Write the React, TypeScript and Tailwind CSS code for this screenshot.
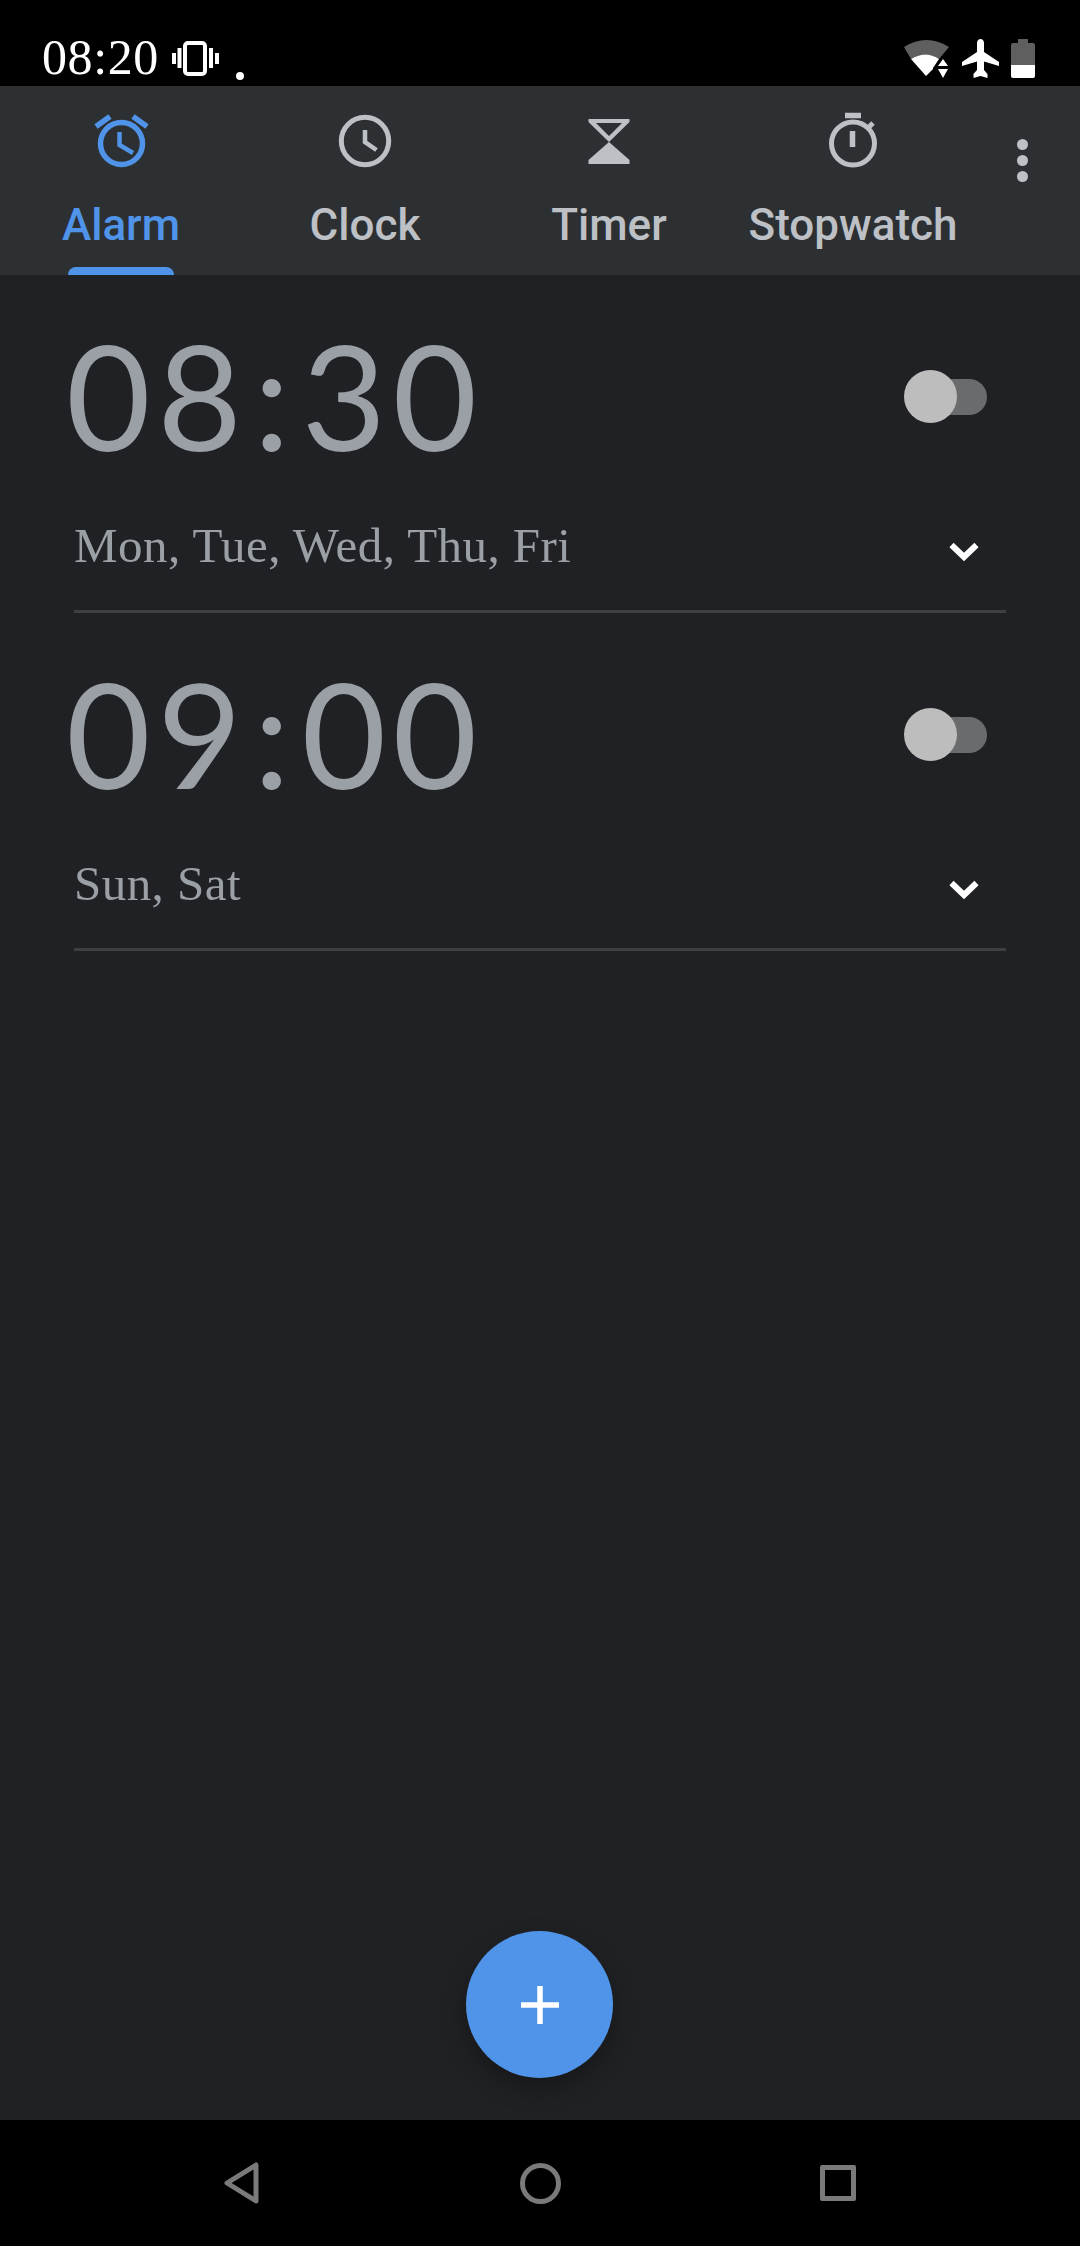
import React from 'react';

const tabs = [
  { label: 'Alarm', active: true },
  { label: 'Clock', active: false },
  { label: 'Timer', active: false },
  { label: 'Stopwatch', active: false },
];

const alarms = [
  { hours: '08', minutes: '30', days: 'Mon, Tue, Wed, Thu, Fri' },
  { hours: '09', minutes: '00', days: 'Sun, Sat' },
];

const TabIcon = ({ name }: { name: string }) => {
  if (name === 'Alarm') {
    return (
      <svg width="60" height="60" viewBox="0 0 60 60" fill="none" stroke="currentColor">
        <circle cx="30.5" cy="31.5" r="21" strokeWidth="5.5" />
        <path d="M5 14.5 L19 4.5 M42 4.5 L56 14.5" strokeWidth="5.5" />
        <path d="M28.5 20 V33 L42 41" strokeWidth="4.5" />
      </svg>
    );
  }
  if (name === 'Clock') {
    return (
      <svg width="60" height="60" viewBox="0 0 60 60" fill="none" stroke="currentColor">
        <circle cx="30" cy="29" r="23.7" strokeWidth="5" />
        <path d="M30 18 V30 L41.5 38" strokeWidth="4.5" />
      </svg>
    );
  }
  if (name === 'Timer') {
    return (
      <svg width="60" height="60" viewBox="0 0 60 60" fill="currentColor">
        <path fillRule="evenodd" d="M9.5 7 H50.5 V10 L30 30 L9.5 10 Z M17 11 H43 L30 24 Z" />
        <path d="M30 30 L50.5 48 V52 H9.5 V48 Z" />
      </svg>
    );
  }
  return (
    <svg width="60" height="60" viewBox="0 0 60 60" fill="none" stroke="currentColor">
      <circle cx="30" cy="31.5" r="21.5" strokeWidth="5" />
      <path d="M22 3.5 H38" strokeWidth="5.5" />
      <path d="M29.5 19 V35" strokeWidth="5.5" />
      <path d="M45 16 L50 11" strokeWidth="5" />
    </svg>
  );
};

const App = () => {
  return (
    <div className="relative flex h-[2246px] w-[1080px] flex-col bg-[#202124] font-['Roboto',sans-serif]">
      {/* status bar */}
      <div className="flex h-[86px] items-start justify-between bg-black">
        <div className="flex items-start">
          <span className="ml-[42px] mt-[31px] font-['Liberation_Serif',serif] text-[50px] leading-[52px] tracking-[0.6px] text-white">08:20</span>
          <svg className="ml-[13px] mt-[40px]" width="80" height="42" viewBox="0 0 80 42" fill="none">
            <rect x="13" y="3" width="20" height="31" rx="3" stroke="white" strokeWidth="4" />
            <path d="M2 13 V24 M7.5 8 V28 M39 8 V28 M45 13 V24" stroke="white" strokeWidth="4" />
            <circle cx="68" cy="36" r="4" fill="white" />
          </svg>
        </div>
        <div className="mr-[45px] mt-[38px] flex items-start">
          <svg width="46" height="40" viewBox="0 0 46 40">
            <path d="M0 9 Q22.5 -5 45 9 L35 21 Q22 12 7 21 Z" fill="#5f5f5f" />
            <path d="M7 21 Q22 12 35 21 L29 30 V31 L22 38 Z" fill="white" />
            <path d="M39 21 L44 28 H34 Z M34 31 H44 L39 40 Z" fill="white" />
          </svg>
          <svg className="ml-[11px]" width="40" height="40" viewBox="0 0 40 40" fill="white">
            <path d="M16 5 C16 -0.5 23 -0.5 23 5 V14 L38 24 V28 L23 23.5 V32 L26.5 36 V40 L19.5 38 L12.5 40 V36 L16 32 V23.5 L1 28 V24 L16 14 Z" />
          </svg>
          <svg className="ml-[10px]" width="24" height="40" viewBox="0 0 24 40">
            <path d="M7 1 H17 V5 H22 Q24 5 24 7 V28 H0 V7 Q0 5 2 5 H7 Z" fill="#5f5f5f" />
            <path d="M0 27 H24 V38 Q24 40 22 40 H2 Q0 40 0 38 Z" fill="white" />
          </svg>
        </div>
      </div>

      {/* tabs */}
      <div className="flex h-[189px] bg-[#2d3033]">
        <div className="-ml-px flex">
          {tabs.map((tab) => (
            <div
              key={tab.label}
              className={`flex w-[244px] flex-col items-center pt-[26px] ${tab.active ? 'text-[#4f94e8]' : 'text-[#bdc1c6]'}`}
            >
              <TabIcon name={tab.label} />
              <span className="mt-[29px] whitespace-nowrap text-[44px] font-medium leading-[48px]">{tab.label}</span>
              {tab.active && <div className="mt-auto h-2 w-[106px] rounded-t-lg bg-[#4f94e8]" />}
            </div>
          ))}
        </div>
        <div className="ml-[42px] mt-[53px] flex flex-col gap-[5px]">
          <div className="h-[11px] w-[11px] rounded-full bg-[#bdc1c6]" />
          <div className="h-[11px] w-[11px] rounded-full bg-[#bdc1c6]" />
          <div className="h-[11px] w-[11px] rounded-full bg-[#bdc1c6]" />
        </div>
      </div>

      {/* alarm list */}
      <div className="flex flex-1 flex-col pl-[74px] pr-[74px]">
        {alarms.map((alarm) => (
          <div key={alarm.hours} className="h-[338px] border-b-[3px] border-[#3c4043]">
            <div className="flex items-start justify-between">
              <span className="-ml-[8px] mt-[45px] font-['Lato',sans-serif] text-[146px] font-normal leading-[150px] tracking-[6.5px] text-[#9aa0a6]">
                {alarm.hours}<span className="mx-[5px]">:</span>{alarm.minutes}
              </span>
              <div className="relative mr-[19px] mt-[95px] h-[53px] w-[83px]">
                <div className="absolute right-0 top-[9px] h-9 w-[72px] rounded-full bg-[#6a6b6d]" />
                <div className="absolute left-0 top-0 h-[53px] w-[53px] rounded-full bg-[#bdbdbd]" />
              </div>
            </div>
            <div className="mt-[48px] flex items-center justify-between">
              <span className="font-['Liberation_Serif',serif] text-[49px] leading-[56px] tracking-[0.45px] text-[#9aa0a6]">{alarm.days}</span>
              <svg className="mr-[27px] mt-[12px]" width="30" height="20" viewBox="0 0 30 20" fill="none">
                <path d="M2.5 3 L15 15 L27.5 3" stroke="white" strokeWidth="6" />
              </svg>
            </div>
          </div>
        ))}
      </div>

      {/* add button */}
      <div className="absolute left-[466px] top-[1931px] flex h-[147px] w-[147px] items-center justify-center rounded-full bg-[#4f94e8] shadow-[0_10px_24px_rgba(0,0,0,0.3)]">
        <svg width="38" height="38" viewBox="0 0 38 38">
          <path d="M19 0 V38 M0 19 H38" stroke="white" strokeWidth="5.5" />
        </svg>
      </div>

      {/* nav bar */}
      <div className="flex h-[126px] items-center bg-black pl-[224px]">
        <svg width="36" height="42" viewBox="0 0 36 42" fill="none">
          <path d="M32 3 V39 L3 21 Z" stroke="#7a7a7a" strokeWidth="5" strokeLinejoin="round" />
        </svg>
        <div className="ml-[260px] h-[41px] w-[41px] rounded-full border-[5px] border-[#7a7a7a]" />
        <div className="ml-[259px] h-9 w-9 rounded-[2px] border-[5px] border-[#7a7a7a]" />
      </div>
    </div>
  );
};

export default App;
